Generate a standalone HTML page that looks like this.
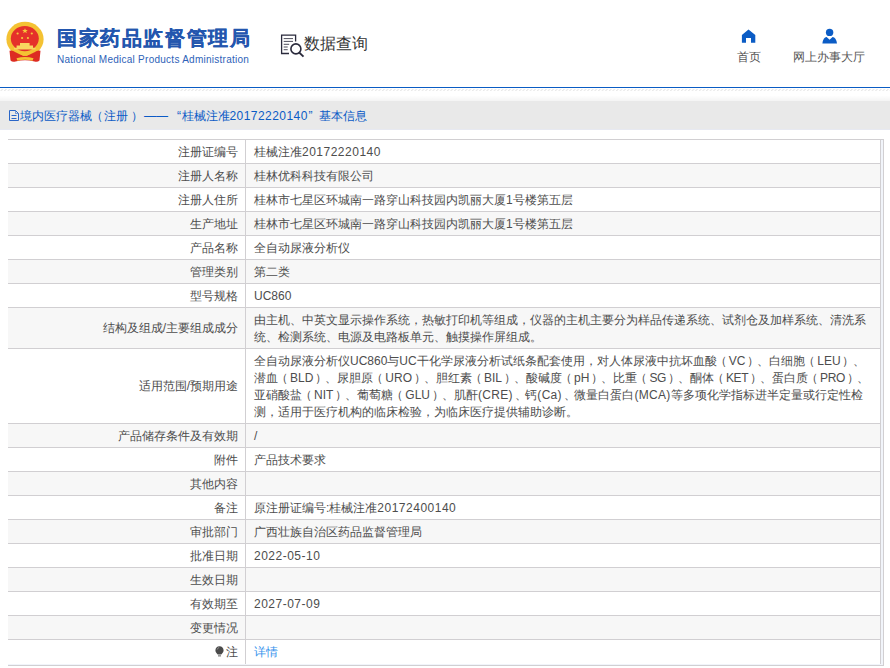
<!DOCTYPE html>
<html><head><meta charset="utf-8">
<style>
*{margin:0;padding:0;box-sizing:border-box}
html,body{width:890px;height:668px;overflow:hidden;background:#fff;font-family:"Liberation Sans",sans-serif;}
.abs{position:absolute}
#title{left:57px;top:24px;font-size:20px;font-weight:bold;color:#2356ae;white-space:nowrap;line-height:28px;letter-spacing:1.6px;-webkit-text-stroke:0.2px #2356ae}
#en{left:57px;top:54px;font-size:10px;color:#2d62b8;white-space:nowrap;line-height:12px;letter-spacing:0.26px}
#sj{left:304px;top:34px;font-size:16px;color:#333;white-space:nowrap;line-height:20px}
.nav{font-size:12px;color:#555;white-space:nowrap;line-height:14px}
#bl{left:0;top:87px;width:890px;height:1px;background:#0a5cc4}
#bl2{left:0;top:88px;width:890px;height:1px;background:#9cc0ea}
#grad{left:0;top:94px;width:890px;height:7px;background:linear-gradient(#fff 20%,#f4f4f4)}
#bar{left:0;top:101px;width:890px;height:29px;background:#e9e9e9;border-bottom:1px solid #e7e9f1}
#bart{left:0;top:108px;height:17px;font-size:12px;color:#0b5bc6;white-space:nowrap;line-height:17px;width:400px}
#bart span{position:absolute;top:0}
#tbl{left:8px;top:139px;width:876px;height:527px;border-top:1px solid #d1cfd2;border-right:1px solid #d1cfd2;border-bottom:1px solid #d1cfd2;background:#f1f4fa}
table{position:absolute;left:8px;top:140px;width:873px;border-collapse:separate;border-spacing:0;font-size:12px;color:#4d4d4d}
td{border-bottom:1px solid #d1cfd2;line-height:17px;padding:4px 0 2px;vertical-align:middle}
td.l{width:238px;text-align:right;padding-right:7px;border-right:1px solid #d1cfd2}
td.v{white-space:nowrap;padding-left:8px;padding-right:8px;border-right:1px solid #d1cfd2}
tr{background:#fff}
tr:nth-child(even){background:#f7f7f7}
tr.last td{border-bottom:none;padding-bottom:3px}
.n{letter-spacing:0.3px}
.m{letter-spacing:-0.4px}
.dg{letter-spacing:0.5px}
i{font-style:normal}
.po{position:relative;left:-2px}
.pc{position:relative;left:1.7px}
.d{position:relative;left:2.5px;margin-right:0.5px}
.up{position:relative;top:-1px}
a{color:#3592ec;text-decoration:none}
</style></head><body>
<svg class="abs" style="left:0;top:0" width="50" height="66" viewBox="0 0 50 66">
  <ellipse cx="25" cy="39.2" rx="18.6" ry="17.4" fill="#f4c233"/>
  <ellipse cx="24.8" cy="38.6" rx="14" ry="12.6" fill="#e5312a"/>
  <path d="M25 28.2l0.8 1.9h2l-1.6 1.2 0.6 2-1.8-1.2-1.8 1.2 0.6-2-1.6-1.2h2z" fill="#f6c93c"/>
  <circle cx="17.6" cy="33.5" r="1.1" fill="#f6c93c"/>
  <circle cx="31.8" cy="33.5" r="1.1" fill="#f6c93c"/>
  <circle cx="22.1" cy="38" r="1.1" fill="#f6c93c"/>
  <circle cx="27.9" cy="38" r="1.1" fill="#f6c93c"/>
  <path d="M20 43h9.6v2.6h3.4v2.2h2.6v1.8H14v-1.8h2.6v-2.2H20z" fill="#f8d660"/>
  <path d="M9.5 50.8 Q12.5 50 15.5 52.2 Q20 55.2 25 55.2 Q30 55.2 34.5 52.2 Q37.5 50 40.5 50.8 L39.5 60.5 Q37.5 62.5 34.5 61.5 Q25 59 15.5 61.5 Q12.5 62.5 10.5 60.5Z" fill="#dd2b22"/>
  <path d="M20.5 53.8 Q25 51.2 29.5 53.8 Q27.5 56.8 25 55.8 Q22.5 56.8 20.5 53.8Z" fill="#f4c233"/>
  <path d="M16.5 58.2 Q25 55.8 33.5 58.2 L32.5 60.8 Q25 58.8 17.5 60.8Z" fill="#f4c233"/>
</svg>
<div id="title" class="abs">国家药品监督管理局</div>
<div id="en" class="abs">National Medical Products Administration</div>
<svg class="abs" style="left:280px;top:34px" width="25" height="25" viewBox="0 0 25 25">
  <path d="M9 19.5 H1.6 V1.2 H15.6 V7.5" fill="none" stroke="#2a2a3c" stroke-width="1.3"/>
  <path d="M3.7 4.6H13M3.7 7.4H13M3.7 10.3H9.2M3.7 13H7.7M3.7 15.7H7.7" stroke="#3a3a4a" stroke-width="0.9"/>
  <circle cx="15.9" cy="14.9" r="5" fill="#fff" stroke="#2a2a3c" stroke-width="1.6"/>
  <path d="M19.3 18.6 L23.5 22.6" stroke="#2a2a3c" stroke-width="2"/>
</svg>
<div id="sj" class="abs">数据查询</div>
<svg class="abs" style="left:741px;top:29px" width="15" height="15" viewBox="0 0 15 15">
  <path d="M7.5 0.6 L14.3 6 V13.8 H10 V9 H5 V13.8 H0.9 V6Z" fill="#0b5cc5"/>
</svg>
<div class="abs nav" style="left:737px;top:50px">首页</div>
<svg class="abs" style="left:821px;top:28px" width="17" height="16" viewBox="0 0 17 16">
  <circle cx="8.6" cy="4.4" r="3.7" fill="#0b5cc5"/>
  <path d="M1.4 15.6 Q2.2 9 5.6 9 L8.6 11.7 L11.6 9 Q15 9 16 15.6Z" fill="#0b5cc5"/>
</svg>
<div class="abs nav" style="left:793px;top:50px">网上办事大厅</div>
<div id="bl" class="abs"></div>
<svg class="abs" style="left:0;top:89px" width="890" height="2"><defs><pattern id="pt" x="0.5" width="3.6" height="2" patternUnits="userSpaceOnUse"><path d="M0.2 1.9 L2.4 0.1" stroke="#d9d9d9" stroke-width="0.9"/></pattern></defs><rect width="890" height="2" fill="url(#pt)"/></svg>
<div id="grad" class="abs"></div>
<div id="bar" class="abs"></div>
<svg class="abs" style="left:9px;top:110px" width="11" height="12" viewBox="0 0 11 12">
  <path d="M0.5 0.5 H6.5 L9.5 3.5 V10.5 H0.5Z" fill="none" stroke="#2a66c8" stroke-width="1"/>
  <path d="M6.5 0.5 V3.5 H9.5" fill="none" stroke="#2a66c8" stroke-width="1" opacity="0.6"/>
  <path d="M2.5 5.5H7.5M2.5 8.5H7.5" stroke="#2a66c8" stroke-width="1"/>
</svg>
<div id="bart" class="abs">
<span style="left:20px">境内医疗器械</span>
<span style="left:90.5px">（</span>
<span style="left:104px">注册</span>
<span style="left:130.5px">）</span>
<span style="left:144px">——</span>
<span style="left:177px">“</span>
<span style="left:181.5px">桂械注准<span style="letter-spacing:0.45px">20172220140</span></span>
<span style="left:308.5px">”</span>
<span style="left:318.5px">基本信息</span>
</div>
<div id="tbl" class="abs"></div>
<table>
<tr><td class="l">注册证编号</td><td class="v">桂械注准<span class="dg">20172220140</span></td></tr>
<tr><td class="l">注册人名称</td><td class="v">桂林优科科技有限公司</td></tr>
<tr><td class="l">注册人住所</td><td class="v">桂林市七星区环城南一路穿山科技园内凯丽大厦1号楼第五层</td></tr>
<tr><td class="l">生产地址</td><td class="v">桂林市七星区环城南一路穿山科技园内凯丽大厦1号楼第五层</td></tr>
<tr><td class="l">产品名称</td><td class="v">全自动尿液分析仪</td></tr>
<tr><td class="l">管理类别</td><td class="v">第二类</td></tr>
<tr><td class="l">型号规格</td><td class="v">UC860</td></tr>
<tr><td class="l"><i class="up">结构及组成/主要组成成分</i></td><td class="v">由主机、中英文显示操作系统，热敏打印机等组成，仪器的主机主要分为样品传递系统、试剂仓及加样系统、清洗系<br>统、检测系统、电源及电路板单元、触摸操作屏组成。</td></tr>
<tr><td class="l"><i class="up">适用范围/预期用途</i></td><td class="v">全自动尿液分析仪UC860与UC干化学尿液分析试纸条配套使用，对人体尿液中抗坏血酸<i class="po">（</i>VC<i class="pc">）</i>、白细胞<i class="po">（</i>LEU<i class="pc">）</i>、<br>潜血<i class="po">（</i>BLD<i class="pc">）</i>、尿胆原<i class="po">（</i>URO<i class="pc">）</i>、胆红素<i class="po">（</i>BIL<i class="pc">）</i>、酸碱度<i class="po">（</i>pH<i class="pc">）</i>、比重<i class="po">（</i><span class="m">SG</span><i class="pc">）</i>、酮体<i class="po">（</i><span class="m">KET</span><i class="pc">）</i>、蛋白质<i class="po">（</i><span class="m">PRO</span><i class="pc">）</i>、<br>亚硝酸盐<i class="po">（</i>NIT<i class="pc">）</i>、葡萄糖<i class="po">（</i>GLU<i class="pc">）</i>、肌酐<span class="n">(CRE)</span><i class="d">、</i>钙<span class="n">(Ca)</span><i class="d">、</i>微量白蛋白<span class="n">(MCA)</span>等多项化学指标进半定量或行定性检<br>测，适用于医疗机构的临床检验，为临床医疗提供辅助诊断。</td></tr>
<tr><td class="l">产品储存条件及有效期</td><td class="v">/</td></tr>
<tr><td class="l">附件</td><td class="v">产品技术要求</td></tr>
<tr><td class="l">其他内容</td><td class="v"></td></tr>
<tr><td class="l">备注</td><td class="v">原注册证编号:桂械注准<span class="dg">20172400140</span></td></tr>
<tr><td class="l">审批部门</td><td class="v">广西壮族自治区药品监督管理局</td></tr>
<tr><td class="l">批准日期</td><td class="v"><span class="dg">2022-05-10</span></td></tr>
<tr><td class="l">生效日期</td><td class="v"></td></tr>
<tr><td class="l">有效期至</td><td class="v"><span class="dg">2027-07-09</span></td></tr>
<tr><td class="l">变更情况</td><td class="v"></td></tr>
<tr class="last"><td class="l"><svg width="9" height="11" viewBox="0 0 9 11" style="vertical-align:-1px;margin-right:2px"><path d="M4.5 0.3C7 0.3 8.6 2.2 8.6 4.4C8.6 6.3 7 7.2 6.3 8.6H2.7C2 7.2 0.4 6.3 0.4 4.4C0.4 2.2 2 0.3 4.5 0.3Z" fill="#4a4a4a"/><path d="M2.2 3.6Q2.6 1.8 4.2 1.4" stroke="#aaa" stroke-width="0.7" fill="none"/><rect x="3" y="9" width="3" height="1.6" fill="#999"/></svg>注</td><td class="v"><a>详情</a></td></tr>
</table>
</body></html>
